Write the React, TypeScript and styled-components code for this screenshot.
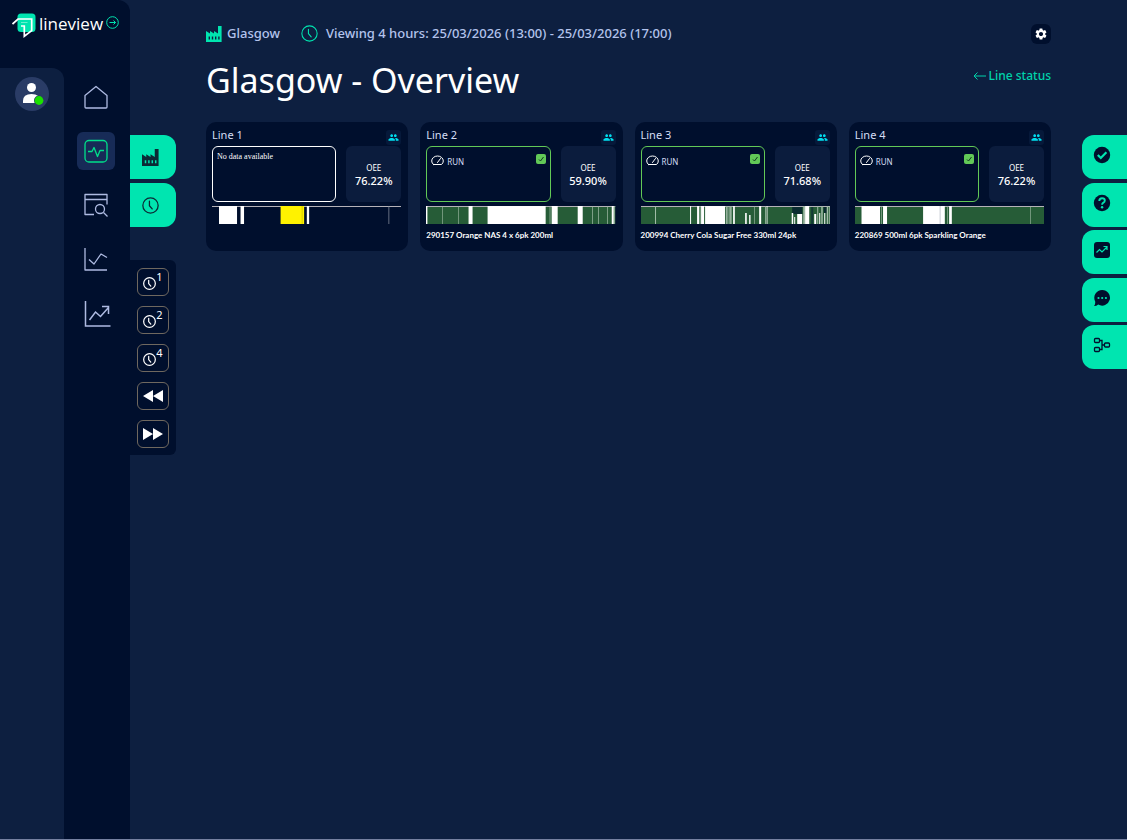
import React from "react";
import styled, { createGlobalStyle } from "styled-components";
import { MdSettings, MdGroup } from "react-icons/md";

const c = {
  page: "#0d1f40",
  dark: "#000f2d",
  panel: "#0d1f40",
  mint: "#00e5b0",
  text: "#b3c3ec",
  white: "#ffffff",
  run: "#62c957",
  band: "#265c37",
};

const GlobalStyle = createGlobalStyle`
  *, *::before, *::after { box-sizing: border-box; }
  body {
    margin: 0;
    background: ${c.page};
    color: ${c.white};
    font-family: "Noto Sans", sans-serif;
  }
  button { font: inherit; color: inherit; border: 0; padding: 0; background: none; cursor: pointer; }
  a { color: inherit; text-decoration: none; }
  svg { display: block; flex: none; }
  h1, h2, p { margin: 0; font-weight: 400; }
`;

const Shell = styled.div`
  display: flex;
  min-height: 100vh;
  border-bottom: 1px solid #7580a0;
`;

const Sidebar = styled.aside`
  display: flex;
  flex-direction: column;
  flex: none;
  width: 130px;
  background: ${c.dark};
  border-top-right-radius: 12px;
`;

const Brand = styled.div`
  display: flex;
  align-items: flex-start;
  height: 68px;
  padding: 12px 0 0 12px;
`;

const BrandName = styled.span`
  margin: 0 3px 0 2px;
  font-family: "Open Sans", sans-serif;
  font-size: 17px;
  font-weight: 500;
  line-height: 24px;
`;

const ExpandButton = styled.button`
  margin-top: 4px;
`;

const SidebarBody = styled.div`
  display: flex;
  flex: 1;
`;

const AccountColumn = styled.div`
  width: 64px;
  padding: 9px 0 0 15px;
  background: ${c.panel};
  border-top-right-radius: 12px;
`;

const Avatar = styled.button`
  display: block;
  border-radius: 50%;
`;

const Nav = styled.nav`
  display: flex;
  flex: 1;
  flex-direction: column;
  align-items: center;
  gap: 16px;
  padding: 10px 2px 0 0;
`;

const NavLink = styled.a<{ $active?: boolean }>`
  display: grid;
  place-items: center;
  width: 38px;
  height: 38px;
  border-radius: 6px;
  color: ${(p) => (p.$active ? "#00e08a" : "#aebbe2")};
  background: ${(p) => (p.$active ? "#172b57" : "transparent")};
`;

const Filters = styled.div`
  display: flex;
  flex: none;
  flex-direction: column;
  gap: 4px;
  width: 46px;
  padding-top: 135px;
`;

const Tab = styled.button<{ $side: "left" | "right" }>`
  display: flex;
  align-items: center;
  justify-content: flex-start;
  width: 100%;
  height: 44px;
  padding: ${(p) => (p.$side === "left" ? "0 0 0 12px" : "0 0 4px 11px")};
  color: ${(p) => (p.$side === "left" ? "#0b2a35" : c.dark)};
  background: ${c.mint};
  border-radius: ${(p) => (p.$side === "left" ? "0 12px 12px 0" : "12px 0 0 12px")};
`;

const TimePanel = styled.div`
  display: flex;
  flex-direction: column;
  align-items: center;
  gap: 10px;
  margin-top: 29px;
  padding: 8px 0 7px;
  background: ${c.dark};
  border-radius: 0 6px 6px 0;
`;

const TimeButton = styled.button`
  display: flex;
  align-items: center;
  justify-content: center;
  width: 32px;
  height: 28px;
  border: 1px solid #6f685f;
  border-radius: 6px;
`;

const Hours = styled.span`
  padding-bottom: 10px;
  font-size: 11px;
  line-height: 12px;
`;

const HoursClock = styled.span`
  padding-top: 3px;
`;

const Main = styled.main`
  flex: 1;
  min-width: 0;
  padding: 23px 31px 0 30px;
`;

const TopBar = styled.div`
  display: flex;
  align-items: center;
  height: 21px;
  color: ${c.text};
  font-size: 13px;
  font-weight: 500;
  line-height: 21px;
`;

const TopIcon = styled.span`
  color: ${c.mint};
`;

const Site = styled.span`
  margin: 0 21px 0 5px;
`;

const Period = styled.span`
  margin-left: 8px;
`;

const SettingsButton = styled.button`
  display: grid;
  place-items: center;
  width: 20px;
  height: 20px;
  margin-left: auto;
  color: ${c.white};
  background: ${c.dark};
  border-radius: 6px;
`;

const TitleRow = styled.div`
  display: flex;
  align-items: flex-start;
  justify-content: space-between;
  height: 78px;
  padding-top: 12px;
`;

const Title = styled.h1`
  font-size: 34px;
  line-height: 48px;
`;

const StatusLink = styled.a`
  display: flex;
  align-items: center;
  gap: 3px;
  margin-top: 10px;
  color: #00d3ab;
  font-size: 12px;
  font-weight: 500;
  line-height: 20px;
`;

const Cards = styled.div`
  display: grid;
  grid-template-columns: repeat(4, minmax(0, 1fr));
  gap: 12px;
`;

const Card = styled.article`
  height: 129px;
  padding: 7px 7px 0 6px;
  background: ${c.dark};
  border-radius: 10px;
`;

const CardHead = styled.div`
  display: flex;
  justify-content: space-between;
  height: 17px;
`;

const CardTitle = styled.h2`
  color: #d5def5;
  font-size: 11px;
  line-height: 12px;
`;

const TeamButton = styled.button`
  display: grid;
  place-items: center;
  width: 15px;
  height: 15px;
  margin-top: 1px;
  color: #00dff0;
  background: #06193a;
  border-radius: 3px;
`;

const Stats = styled.div`
  display: flex;
  gap: 10px;
  height: 56px;
`;

const State = styled.div<{ $running: boolean }>`
  display: flex;
  flex: 1;
  align-items: flex-start;
  padding: 7px 4px;
  border: 1px solid ${(p) => (p.$running ? c.run : c.white)};
  border-radius: 6px;
`;

const StateName = styled.span`
  flex: 1;
  padding-left: 3px;
  color: #d5def5;
  font-size: 8px;
  line-height: 15px;
`;

const Empty = styled.p`
  font-family: "Liberation Serif", serif;
  font-size: 8px;
  line-height: 6px;
`;

const Oee = styled.div`
  display: flex;
  flex-direction: column;
  align-items: center;
  justify-content: center;
  width: 55px;
  background: #0b1c3d;
  border-radius: 6px;
`;

const OeeLabel = styled.span`
  font-size: 8px;
  line-height: 12px;
`;

const OeeValue = styled.span`
  font-size: 11px;
  font-weight: 500;
  line-height: 13px;
`;

const Chart = styled.svg`
  width: 100%;
  height: 19px;
  margin-top: 3px;
`;

const Product = styled.p`
  margin-top: 5px;
  font-family: Lato, sans-serif;
  font-size: 8px;
  font-weight: 700;
  line-height: 12px;
  white-space: nowrap;
`;

const Actions = styled.div`
  flex: none;
  width: 45px;
  padding-top: 135px;
`;

const ActionList = styled.div`
  display: flex;
  flex-direction: column;
  justify-content: space-between;
  height: 234px;
`;

const Factory = ({ size = 16 }: { size?: number }) => (
  <svg width={size} height={size} viewBox="0 0 16 16" fill="currentColor" aria-hidden="true">
    <path
      fillRule="evenodd"
      d="M0 5l4 2.600V5l4 2.600V5l4 2.600V0h3.600v16H0zM2.600 10.500v3H4v-3zm3.200 0v3h1.400v-3zm3.200 0v3h1.400v-3zm3.200 0v3h1.400v-3z"
    />
  </svg>
);

const Clock = ({ size = 16, stroke = 1.2 }: { size?: number; stroke?: number }) => (
  <svg width={size} height={size} viewBox="0 0 16 16" fill="none" stroke="currentColor" strokeWidth={stroke} strokeLinecap="round" strokeLinejoin="round" aria-hidden="true">
    <circle cx="8" cy="8" r="7.200" />
    <path d="M7 4v4.200l2.600 3" />
  </svg>
);

const Logo = () => (
  <svg width="25" height="27" viewBox="0 0 25 27" fill="none" aria-hidden="true">
    <path d="M9 1.500h11q3.500 0 3.500 3.500v11.500q0 3.500-3.500 3.500H9q-3.500 0-3.500-3.500V5q0-3.500 3.500-3.500z" fill={c.mint} />
    <path d="M.5 12L6 7h13.700v11.700l-7.400 5.600V14H9" stroke="#fff" strokeWidth="1.700" />
    <path d="M9 10.500h6.500" stroke="#fff" strokeWidth="1" opacity=".4" />
  </svg>
);

const ArrowCircle = () => (
  <svg width="13" height="13" viewBox="0 0 13 13" fill="none" stroke={c.mint} aria-hidden="true">
    <circle cx="6.500" cy="6.500" r="5.800" />
    <path d="M3.500 6.500h6M7.500 4.500l2 2-2 2" />
  </svg>
);

const Person = () => (
  <svg width="34" height="34" viewBox="0 0 34 34" aria-hidden="true">
    <circle cx="17" cy="17" r="17" fill="#2a3c66" />
    <circle cx="16.500" cy="10.500" r="4.500" fill="#fff" />
    <path d="M8 26v-2q0-7 8.500-7t8.500 7v2z" fill="#fff" />
    <circle cx="24" cy="23.500" r="5" fill="#2a3c66" />
    <circle cx="24" cy="23.500" r="4.400" fill="#1be000" />
  </svg>
);

const Line = ({ children }: { children: React.ReactNode }) => (
  <svg width="26" height="26" viewBox="0 0 26 26" fill="none" stroke="currentColor" strokeWidth="1.300" strokeLinejoin="round" aria-hidden="true">
    {children}
  </svg>
);

const HomeIcon = () => (
  <Line>
    <path d="M2 11.500L13 2.500l11 9V23q0 1-1 1H3q-1 0-1-1z" />
  </Line>
);
const PulseIcon = () => (
  <Line>
    <rect x="2" y="2.500" width="22" height="21.500" rx="4" />
    <path d="M5 13.500h4l2-4 3.500 9 2.500-6h4" />
  </Line>
);
const SearchWindowIcon = () => (
  <Line>
    <path d="M11 22.500H2v-20h22v10M2 7.500h22" />
    <circle cx="17" cy="17" r="4.500" />
    <path d="M20.500 20.500l4 4" />
  </Line>
);
const ChartIcon = () => (
  <Line>
    <path d="M2 2v22h22M6 13.500l5 4.500 7-10 6 3.500" />
  </Line>
);
const TrendIcon = () => (
  <svg width="30" height="30" viewBox="0 0 30 30" fill="none" stroke="currentColor" strokeWidth="1.500" aria-hidden="true">
    <path d="M4.500 3v25h25M8.500 22l6-8 5 4.500 8-9M21 8.500h6.500v7.500" />
  </svg>
);

const Skip = ({ back }: { back?: boolean }) => (
  <svg width="20" height="12" viewBox="0 0 20 12" fill="#fff" aria-hidden="true">
    <path d={back ? "M10 0v12L0 6zM20 0v12L10 6z" : "M0 0v12l10-6zM10 0v12l10-6z"} />
  </svg>
);

const Gauge = () => (
  <svg width="13" height="12" viewBox="0 0 13 12" fill="none" stroke="#fff" strokeWidth="1" strokeLinecap="round" aria-hidden="true">
    <path d="M2.500 10.500h8q1.800-1.500 1.800-3.500a5.800 5 0 0 0-11.600 0q0 2 1.800 3.500zM6.500 8.500l3-4" />
  </svg>
);

const Tick = () => (
  <svg width="10" height="10" viewBox="0 0 10 10" fill="none" aria-hidden="true">
    <rect width="10" height="10" rx="2" fill={c.run} />
    <path d="M3 5.500l1.500 1.500 3-4" stroke="#123a20" />
  </svg>
);

const CheckCircle = () => (
  <svg width="18" height="18" viewBox="0 0 18 18" fill="none" aria-hidden="true">
    <circle cx="9" cy="9" r="8.200" fill={c.dark} />
    <path d="M4.800 9l3 3 5.600-5.800" stroke={c.mint} strokeWidth="2.200" />
  </svg>
);

const HelpCircle = () => (
  <svg width="18" height="18" viewBox="0 0 18 18" fill="none" aria-hidden="true">
    <circle cx="9" cy="9" r="8.200" fill={c.dark} />
    <path d="M6.300 7q0-2.700 2.800-2.700 2.700 0 2.700 2.300 0 1.300-1.400 2.100Q9.100 9.400 9.100 10.700" stroke={c.mint} strokeWidth="1.900" />
    <circle cx="9.100" cy="13.300" r="1.200" fill={c.mint} />
  </svg>
);

const TrendBox = () => (
  <svg width="18" height="18" viewBox="0 0 18 18" fill="none" aria-hidden="true">
    <rect x="1" y="1" width="16" height="16" rx="3" fill={c.dark} />
    <path d="M3.500 11.500l3-3 2.500 2.500 5-5M10.500 5.500H14V9" stroke={c.mint} strokeWidth="1.200" />
  </svg>
);

const Chat = () => (
  <svg width="18" height="18" viewBox="0 0 18 18" aria-hidden="true">
    <path d="M9.200 1a7.800 7.800 0 1 1-4 14.500Q3.500 17 1 17q1.500-1.800 1.200-4.500A7.800 7.800 0 0 1 9.200 1z" fill={c.dark} />
    <g fill={c.mint}>
      <circle cx="5.500" cy="9" r="1.100" />
      <circle cx="9.200" cy="9" r="1.100" />
      <circle cx="12.900" cy="9" r="1.100" />
    </g>
  </svg>
);

const Flow = () => (
  <svg width="18" height="18" viewBox="0 0 18 18" fill="none" stroke={c.dark} strokeWidth="1.300" aria-hidden="true">
    <rect x="1.500" y="2.500" width="5" height="4" rx="1" />
    <rect x="1.500" y="11.500" width="5" height="4" rx="1" />
    <rect x="11.500" y="7" width="5" height="4" rx="1" />
    <path d="M6.500 4.500H9v9H6.500M9 9h2.500" />
  </svg>
);

const BackArrow = () => (
  <svg width="13" height="10" viewBox="0 0 13 10" fill="none" stroke="currentColor" aria-hidden="true">
    <path d="M13 5H1M4.500 1.500L1 5l3.500 3.500" />
  </svg>
);

type Bar = [x: number, width: number, color?: string, top?: number];

interface LineData {
  name: string;
  oee: string;
  product?: string;
  running: boolean;
  bars: Bar[];
}

const grey = "#8d94a3";
const pale = "#a3bda9";

const lines: LineData[] = [
  {
    name: "Line 1",
    oee: "76.22%",
    running: false,
    bars: [[7, 18], [28.500, 3.500], [68.500, 23.500, "#fff200"], [89.700, 0.500, "#b0a800"], [94.700, 2.300], [176.300, 0.700, grey]],
  },
  {
    name: "Line 2",
    oee: "59.90%",
    product: "290157 Orange NAS 4 x 6pk 200ml",
    running: true,
    bars: [[0, 1.400], [16, 0.600, pale], [32, 0.600, pale], [42.500, 4], [61.500, 58], [123.500, 0.700, pale], [125.500, 6], [151.500, 5], [166, 0.700, pale], [172, 0.700, pale], [181, 0.700, pale], [185.500, 2], [188, 0.800, pale]],
  },
  {
    name: "Line 3",
    oee: "71.68%",
    product: "200994 Cherry Cola Sugar Free 330ml 24pk",
    running: true,
    bars: [
      [14, 1, pale], [49, 1], [56, 2], [58.500, 1, pale], [60, 3], [64, 20], [85, 1.500, pale], [87.500, 1, pale], [89, 1.500, pale], [92, 1.700],
      [104, 1.600, c.white, 8], [108, 1.400, c.white, 10], [113, 0.600, pale], [118, 2], [124, 0.800, pale], [125.500, 0.800],
      [151, 10, "#0b2c31", 2], [151, 10, c.band, 9], [150.500, 1.500, c.white, 8], [153, 1, c.white, 12], [156, 5, c.white, 9], [162, 4, pale], [164, 4], [170, 2, "#123a35", 2],
      [173, 2, c.white, 9], [176, 1, pale], [178, 1, c.white, 8], [180, 1.500, pale], [182.500, 3, "#0b2c31", 2], [182.500, 3, c.band, 8], [183, 1, c.white, 8], [185.500, 1.500, pale], [188, 1, pale],
    ],
  },
  {
    name: "Line 4",
    oee: "76.22%",
    product: "220869 500ml 6pk Sparkling Orange",
    running: true,
    bars: [[6.500, 18.500], [26, 0.600, pale], [28, 4], [68, 21.700], [84.700, 0.500, grey], [92, 0.600, pale], [94, 2.700], [175, 0.600, pale]],
  },
];

const Timeline = ({ line }: { line: LineData }) => (
  <Chart viewBox="0 0 189 19" preserveAspectRatio="none" role="img" aria-label={`${line.name} timeline`}>
    {line.running && <rect y="1" width="189" height="18" fill={c.band} />}
    <rect y="1" width="189" height="1" fill="#b5b2b8" />
    {line.bars.map(([x, width, color = c.white, top = 1], i) => (
      <rect key={i} x={x} y={top} width={width} height={19 - top} fill={color} />
    ))}
  </Chart>
);

const LineCard = ({ line }: { line: LineData }) => (
  <Card>
    <CardHead>
      <CardTitle>{line.name}</CardTitle>
      <TeamButton aria-label={`${line.name} team`}>
        <MdGroup size={11} />
      </TeamButton>
    </CardHead>
    <Stats>
      <State $running={line.running}>
        {line.running ? (
          <>
            <Gauge />
            <StateName>RUN</StateName>
            <Tick />
          </>
        ) : (
          <Empty>No data available</Empty>
        )}
      </State>
      <Oee>
        <OeeLabel>OEE</OeeLabel>
        <OeeValue>{line.oee}</OeeValue>
      </Oee>
    </Stats>
    <Timeline line={line} />
    {line.product && <Product>{line.product}</Product>}
  </Card>
);

export default function App() {
  return (
    <>
      <GlobalStyle />
      <Shell>
        <Sidebar>
          <Brand>
            <Logo />
            <BrandName>lineview</BrandName>
            <ExpandButton aria-label="Expand menu">
              <ArrowCircle />
            </ExpandButton>
          </Brand>
          <SidebarBody>
            <AccountColumn>
              <Avatar aria-label="Account">
                <Person />
              </Avatar>
            </AccountColumn>
            <Nav aria-label="Main">
              <NavLink href="#home" aria-label="Home"><HomeIcon /></NavLink>
              <NavLink href="#live" aria-label="Live" $active><PulseIcon /></NavLink>
              <NavLink href="#explore" aria-label="Explore"><SearchWindowIcon /></NavLink>
              <NavLink href="#reports" aria-label="Reports"><ChartIcon /></NavLink>
              <NavLink href="#trends" aria-label="Trends"><TrendIcon /></NavLink>
            </Nav>
          </SidebarBody>
        </Sidebar>
        <Filters>
          <Tab $side="left" aria-label="Choose site"><Factory size={17} /></Tab>
          <Tab $side="left" aria-label="Choose period"><Clock size={17} /></Tab>
          <TimePanel>
            {[1, 2, 4].map((hours) => (
              <TimeButton key={hours} aria-label={`Last ${hours} hours`}>
                <HoursClock><Clock size={13} stroke={1.500} /></HoursClock>
                <Hours>{hours}</Hours>
              </TimeButton>
            ))}
            <TimeButton aria-label="Earlier"><Skip back /></TimeButton>
            <TimeButton aria-label="Later"><Skip /></TimeButton>
          </TimePanel>
        </Filters>
        <Main>
          <TopBar>
            <TopIcon><Factory size={16} /></TopIcon>
            <Site>Glasgow</Site>
            <TopIcon><Clock size={17} stroke={1} /></TopIcon>
            <Period>Viewing 4 hours: 25/03/2026 (13:00) - 25/03/2026 (17:00)</Period>
            <SettingsButton aria-label="Settings"><MdSettings size={14} /></SettingsButton>
          </TopBar>
          <TitleRow>
            <Title>Glasgow - Overview</Title>
            <StatusLink href="#line-status"><BackArrow />Line status</StatusLink>
          </TitleRow>
          <Cards>
            {lines.map((line) => (
              <LineCard key={line.name} line={line} />
            ))}
          </Cards>
        </Main>
        <Actions>
          <ActionList>
            <Tab $side="right" aria-label="Tasks"><CheckCircle /></Tab>
            <Tab $side="right" aria-label="Help"><HelpCircle /></Tab>
            <Tab $side="right" aria-label="Performance"><TrendBox /></Tab>
            <Tab $side="right" aria-label="Messages"><Chat /></Tab>
            <Tab $side="right" aria-label="Line layout"><Flow /></Tab>
          </ActionList>
        </Actions>
      </Shell>
    </>
  );
}
